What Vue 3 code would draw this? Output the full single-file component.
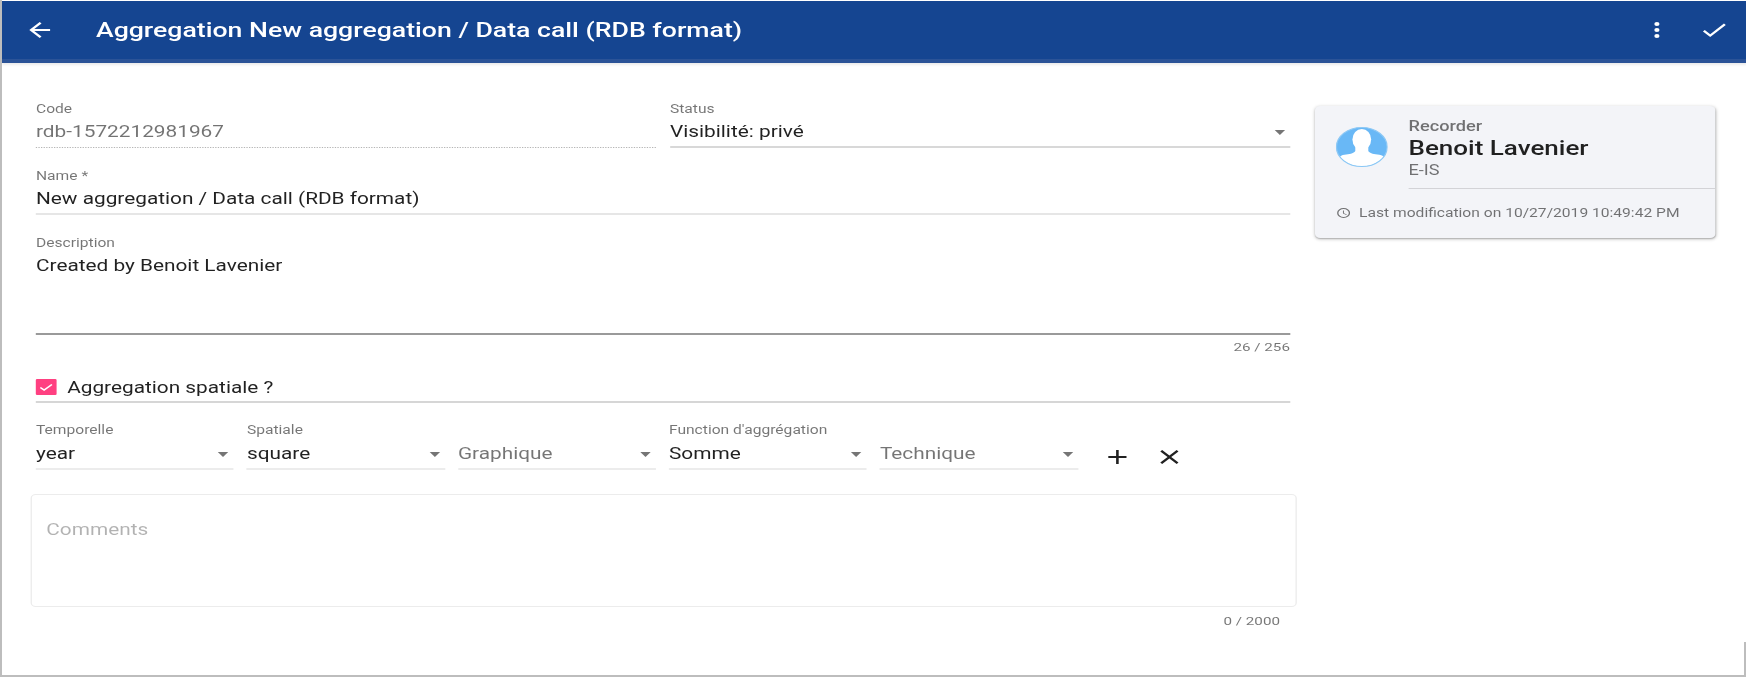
<template>
  <div class="screen">
    <div class="page">
      <header class="toolbar">
        <button class="icon-btn back" type="button" aria-label="Back">
          <svg viewBox="0 0 24 24" width="24" height="24"><path d="M20 11H7.83l5.59-5.59L12 4l-8 8 8 8 1.41-1.41L7.83 13H20z" /></svg>
        </button>
        <h1 class="title">Aggregation New aggregation / Data call (RDB format)</h1>
        <button class="icon-btn more" type="button" aria-label="Options">
          <svg viewBox="0 0 24 24" width="24" height="24"><path d="M12 8a2 2 0 1 0 0-4 2 2 0 0 0 0 4zm0 2a2 2 0 1 0 0 4 2 2 0 0 0 0-4zm0 6a2 2 0 1 0 0 4 2 2 0 0 0 0-4z" /></svg>
        </button>
        <button class="icon-btn" type="button" aria-label="Save">
          <svg viewBox="0 0 24 24" width="24" height="24"><path d="M9 16.17 4.83 12l-1.42 1.41L9 19 21 7l-1.41-1.41z" /></svg>
        </button>
      </header>

      <main class="content">
        <form class="form" @submit.prevent>
          <div class="two-cols">
            <div class="field">
              <label>Code</label>
              <div class="value muted dotted">{{ form.code }}</div>
            </div>
            <div class="field">
              <label>Status</label>
              <div class="value select strong-line">
                <span>{{ form.status }}</span><i class="caret"></i>
              </div>
            </div>
          </div>

          <div class="field name">
            <label>Name *</label>
            <div class="value light-line">{{ form.name }}</div>
          </div>

          <div class="field description">
            <label>Description</label>
            <div class="value area">{{ form.description }}</div>
            <div class="hint">{{ form.description.length }} / 256</div>
          </div>

          <div class="check-row">
            <span class="checkbox">
              <svg viewBox="0 0 16 16" width="16" height="16"><path d="M3.5 8.4 6.4 11l6-5.5" /></svg>
            </span>
            <span>Aggregation spatiale ?</span>
          </div>

          <div class="strata">
            <div v-for="s in strata" :key="s.id" class="field small">
              <label>{{ s.label }}</label>
              <div class="value select faint-line" :class="{ placeholder: !s.value }">
                <span>{{ s.value || s.placeholder }}</span><i class="caret"></i>
              </div>
            </div>
            <button class="icon-btn dark" type="button" aria-label="Add">
              <svg viewBox="0 0 24 24" width="24" height="24"><path d="M19 13h-6v6h-2v-6H5v-2h6V5h2v6h6z" /></svg>
            </button>
            <button class="icon-btn dark" type="button" aria-label="Remove">
              <svg viewBox="0 0 24 24" width="24" height="24"><path d="M19 6.41 17.59 5 12 10.59 6.41 5 5 6.41 10.59 12 5 17.59 6.41 19 12 13.41 17.59 19 19 17.59 13.41 12z" /></svg>
            </button>
          </div>

          <div class="comments">Comments</div>
          <div class="hint comments-hint">0 / 2000</div>
        </form>

        <aside class="card">
          <div class="card-top">
            <svg class="avatar" viewBox="0 0 40 40" width="40" height="40">
              <defs>
                <clipPath id="avatar-clip"><circle cx="20" cy="20" r="19.5" /></clipPath>
              </defs>
              <circle cx="20" cy="20" r="19.5" fill="#69b8f6" />
              <g clip-path="url(#avatar-clip)" fill="#fff">
                <ellipse cx="20" cy="12.5" rx="7.2" ry="10.5" />
                <path d="M15 18h10v6c1 2 3 3 7 3.5 4 .5 8 2 8 12.500H0c0-10 4-12 8-12.500 4-.5 6-1.500 7-3.500z" />
              </g>
              <circle cx="20" cy="20" r="19.5" fill="none" stroke="#8cc8f5" stroke-width="1" />
            </svg>
            <div class="who">
              <div class="role">Recorder</div>
              <div class="person">Benoit Lavenier</div>
              <div class="dept">E-IS</div>
            </div>
          </div>
          <div class="card-sep"></div>
          <div class="card-foot">
            <svg viewBox="0 0 24 24" width="12" height="12"><path d="M12 2a10 10 0 1 0 0 20 10 10 0 0 0 0-20zm0 18a8 8 0 1 1 0-16 8 8 0 0 1 0 16zm.5-13H11v6l5.25 3.15.75-1.23-4.5-2.67z" /></svg>
            <span>Last modification on 10/27/2019 10:49:42 PM</span>
          </div>
        </aside>
      </main>
    </div>
    <div class="scroll-edge"></div>
  </div>
</template>

<script setup>
import { reactive } from "vue";

const form = reactive({
  code: "rdb-1572212981967",
  status: "Visibilité: privé",
  name: "New aggregation / Data call (RDB format)",
  description: "Created by Benoit Lavenier"
});

const strata = [
  { id: "time", label: "Temporelle", value: "year" },
  { id: "space", label: "Spatiale", value: "square" },
  { id: "graph", label: "", value: "", placeholder: "Graphique" },
  { id: "agg", label: "Function d'aggrégation", value: "Somme" },
  { id: "tech", label: "", value: "", placeholder: "Technique" }
];
</script>

<style>
html,
body {
  margin: 0;
  overflow: hidden;
  background: #fff;
}
</style>

<style scoped>
/* the capture is stretched sideways, so the whole page is laid out narrow and scaled */
.screen {
  position: relative;
  width: 1744px;
  height: 674px;
  padding-top: 1px;
  border-left: 2px solid #bdbdbd;
  border-bottom: 2px solid #bdbdbd;
  overflow: hidden;
  font-family: Roboto, "Liberation Sans", sans-serif;
  color: rgba(0, 0, 0, 0.87);
}

.page {
  width: 1341.5px;
  transform: scale(1.3, 1);
  transform-origin: 0 0;
  filter: blur(0.55px);
}

.scroll-edge {
  position: absolute;
  right: 0;
  bottom: 0;
  width: 2px;
  height: 33px;
  background: #bdbdbd;
}

.toolbar {
  display: flex;
  align-items: center;
  height: 58px;
  padding: 0 12.5px 0 16.5px;
  background: #154591;
  border-bottom: 4px solid #2b5397;
  box-shadow: 0 2px 2px rgba(0, 0, 0, 0.08);
  color: #fff;
}

.title {
  flex: 1;
  margin: 0 0 0 31.8px;
  font-size: 20.5px;
  font-weight: 500;
}

.icon-btn {
  display: flex;
  width: 24px;
  height: 24px;
  padding: 0;
  border: 0;
  background: none;
  fill: #fff;
  cursor: pointer;
}

.more {
  margin-right: 20px;
}

.content {
  display: flex;
  gap: 19.2px;
  padding: 40px 0 0 26.15px;
}

.form {
  width: 964.6px;
}

.two-cols {
  display: grid;
  grid-template-columns: 1fr 1fr;
  gap: 10.8px;
}

.field label {
  display: block;
  height: 12px;
  font-size: 12px;
  line-height: 12px;
  color: rgba(0, 0, 0, 0.54);
}

.value {
  height: 20px;
  margin-top: 7px;
  padding-bottom: 5px;
  font-size: 16px;
  line-height: 20px;
}

.muted {
  color: rgba(0, 0, 0, 0.55);
}

.dotted {
  border-bottom: 1px dotted #b5b5b5;
}

.select {
  display: flex;
  justify-content: space-between;
  align-items: center;
  padding-right: 4px;
}

.strong-line {
  border-bottom: 2px solid #d8d8d8;
  padding-bottom: 4px;
}

.light-line {
  border-bottom: 2px solid #e6e6e6;
  padding-bottom: 4px;
}

.faint-line {
  border-bottom: 2px solid #ececec;
  padding-bottom: 4px;
}

.caret {
  width: 0;
  height: 0;
  border-left: 4px solid transparent;
  border-right: 4px solid transparent;
  border-top: 5px solid #757575;
}

.name {
  margin-top: 22px;
}

.description {
  margin-top: 22px;
}

.area {
  height: 77px;
  padding-bottom: 0;
  border-bottom: 2px solid #9a9a9a;
}

.hint {
  margin-top: 6px;
  font-size: 11.7px;
  line-height: 12px;
  text-align: right;
  color: rgba(0, 0, 0, 0.54);
}

.check-row {
  display: flex;
  align-items: center;
  gap: 8px;
  height: 20px;
  margin-top: 24px;
  padding-bottom: 4px;
  border-bottom: 2px solid #d6d6d6;
  font-size: 16px;
}

.checkbox {
  display: flex;
  width: 16px;
  height: 16px;
  border-radius: 1px;
  background: #ff4081;
}

.checkbox path {
  fill: none;
  stroke: #fff;
  stroke-width: 1.3;
}

.strata {
  display: flex;
  gap: 10px;
  margin-top: 21px;
}

.small {
  width: 152.3px;
}

.small .value {
  margin-top: 8px;
}

.placeholder {
  color: rgba(0, 0, 0, 0.54);
}

.dark {
  fill: rgba(0, 0, 0, 0.87);
  width: 40px;
  justify-content: center;
  margin: 21px -10px 0 0;
}

.comments {
  box-sizing: border-box;
  width: 974px;
  height: 113px;
  margin: 24px 0 0 -4.6px;
  padding: 25px 0 0 11.5px;
  border: 1px solid #ececec;
  border-radius: 4px;
  font-size: 16px;
  line-height: 20px;
  color: rgba(0, 0, 0, 0.3);
}

.comments-hint {
  margin-top: 8px;
  padding-right: 7.7px;
}

.card {
  width: 308.5px;
  height: 132px;
  margin-top: 3px;
  border-radius: 4px;
  background: #f3f4f8;
  box-shadow: 0 1px 3px rgba(0, 0, 0, 0.3), 0 1px 1px rgba(0, 0, 0, 0.12);
}

.card-top {
  display: flex;
  gap: 16px;
  padding: 13px 0 0 16px;
  height: 69px;
}

.avatar {
  margin-top: 8px;
}

.role {
  font-size: 14px;
  line-height: 14px;
  font-weight: 500;
  color: rgba(0, 0, 0, 0.54);
}

.person {
  margin-top: 2px;
  font-size: 20px;
  line-height: 26px;
  font-weight: 500;
}

.dept {
  margin-top: 1px;
  font-size: 14px;
  line-height: 16px;
  color: rgba(0, 0, 0, 0.54);
}

.card-sep {
  height: 1px;
  margin-left: 72px;
  background: #d3d3d7;
}

.card-foot {
  display: flex;
  align-items: center;
  gap: 6px;
  padding: 17px 0 0 16px;
  font-size: 12px;
  line-height: 14px;
  color: rgba(0, 0, 0, 0.54);
  fill: rgba(0, 0, 0, 0.54);
}
</style>
